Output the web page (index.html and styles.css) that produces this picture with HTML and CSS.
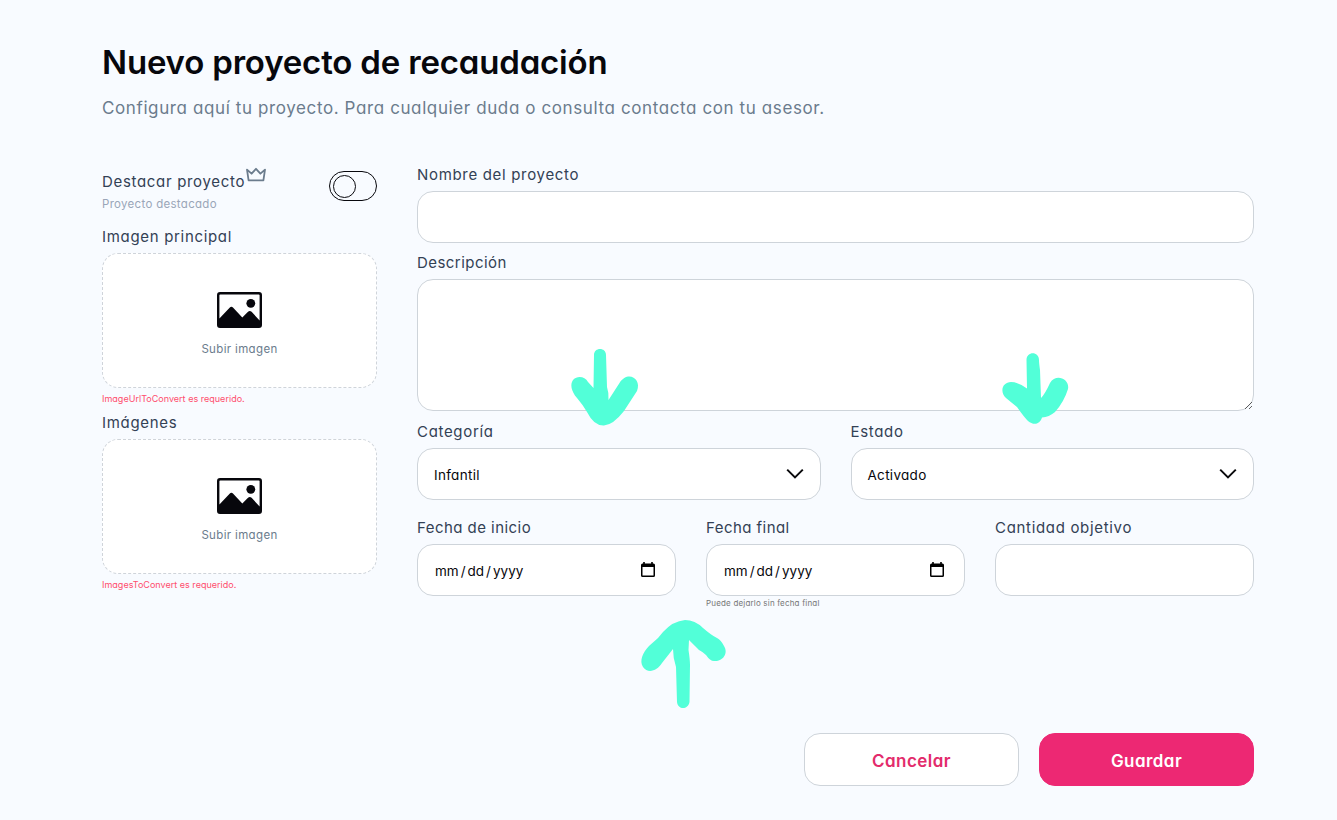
FILE: index.html
```html
<!DOCTYPE html>
<html lang="es">
<head>
<meta charset="utf-8">
<title>Nuevo proyecto de recaudación</title>
<link rel="stylesheet" href="styles.css">
</head>
<body>
<svg class="sprite" width="0" height="0">
  <symbol id="picture" viewBox="0 0 46 37">
    <path fill="#07070c" fill-rule="evenodd" d="M3 0H42Q45 0 45 3V33Q45 36 42 36H3Q0 36 0 33V3Q0 0 3 0ZM3.3 2.4Q2.4 2.4 2.4 3.3V26.5L12.6 15.7Q14.4 14 16.2 15.7L25.3 25.5L31 19.8Q32.8 18 34.6 19.8L42.6 28.5V3.3Q42.6 2.4 41.7 2.4Z"/>
    <circle cx="33.8" cy="11.3" r="4.4" fill="#07070c"/>
  </symbol>
  <symbol id="chevron" viewBox="0 0 18 12"><path d="M1.2 1.6L9 9.4L16.8 1.6" fill="none" stroke="#0a0a0c" stroke-width="2"/></symbol>
  <symbol id="calendar" viewBox="0 0 14 16"><path fill="#000" fill-rule="evenodd" d="M2.2 0H3.8V1.5H10.2V0H11.8V1.5H12.5Q14 1.5 14 3V13.5Q14 15 12.5 15H1.5Q0 15 0 13.5V3Q0 1.5 1.5 1.5H2.2ZM1.5 5V13.5H12.5V5Z"/></symbol>
</svg>
<main class="page">
  <header>
    <h1 class="title">Nuevo proyecto de recaudación</h1>
    <p class="subtitle">Configura aquí tu proyecto. Para cualquier duda o consulta contacta con tu asesor.</p>
  </header>
  <form class="form">
    <section class="media">
      <div class="feature">
        <div>
          <div class="feature-name"><span class="label">Destacar proyecto</span><svg class="crown" viewBox="0 0 22 16"><path d="M2 2.6L6.6 6.7L11 1.8L15.4 6.7L20 2.6L18.4 13.4H3.6Z" fill="none" stroke="#6b7c8d" stroke-width="1.8" stroke-linejoin="round"/></svg></div>
          <div class="feature-note">Proyecto destacado</div>
        </div>
        <span class="toggle"><span class="knob"></span></span>
      </div>
      <div class="label">Imagen principal</div>
      <div class="drop"><svg class="picture"><use href="#picture"/></svg><span>Subir imagen</span></div>
      <div class="error">ImageUrlToConvert es requerido.</div>
      <div class="label">Imágenes</div>
      <div class="drop"><svg class="picture"><use href="#picture"/></svg><span>Subir imagen</span></div>
      <div class="error">ImagesToConvert es requerido.</div>
    </section>
    <section class="fields">
      <div class="field"><label class="label" for="name">Nombre del proyecto</label><input class="control" id="name"></div>
      <div class="field description"><label class="label snug" for="description">Descripción</label><textarea class="control area" id="description"></textarea></div>
      <div class="row two">
        <div class="field"><div class="label">Categoría</div><div class="control picker"><span>Infantil</span><svg class="chevron"><use href="#chevron"/></svg></div></div>
        <div class="field"><div class="label">Estado</div><div class="control picker"><span>Activado</span><svg class="chevron"><use href="#chevron"/></svg></div></div>
      </div>
      <div class="row three">
        <div class="field"><div class="label snug">Fecha de inicio</div><div class="control date"><span>mm<i>/</i>dd<i>/</i>yyyy</span><svg class="calendar"><use href="#calendar"/></svg></div></div>
        <div class="field"><div class="label snug">Fecha final</div><div class="control date"><span>mm<i>/</i>dd<i>/</i>yyyy</span><svg class="calendar"><use href="#calendar"/></svg></div><div class="hint">Puede dejarlo sin fecha final</div></div>
        <div class="field"><label class="label" for="goal">Cantidad objetivo</label><input class="control" id="goal"></div>
      </div>
    </section>
  </form>
  <footer class="actions"><button class="button cancel">Cancelar</button><button class="button save">Guardar</button></footer>
  <svg class="marks" viewBox="0 0 1337 820" fill="#52ffd8">
    <path d="M594 355C594 347 606 347 606 355L607 387Q609 393 608.500 400L619.500 383C628 370 642 379 637 391L624 411Q613 425 604 425.500Q594 426 587 412Q583 405 577 398C571 391 570 384 573 380C578 375 585 377 588 382L593.500 388Z"/>
    <path d="M1026.500 360C1026.500 351 1039 351 1039 360Q1039 363 1040 370L1041 398Q1045 394 1050 383C1056 373 1070 379 1068 389Q1064 402 1055 412Q1049 417 1042 417.500C1040 424 1034 426 1028 421Q1024 417 1017 407Q1012 403 1006 398C999 391 1003 382 1011 382Q1018 382 1027 388.500Z"/>
    <path d="M663 632Q673 621 685 620Q695 620 703 628Q711 635 717 638Q721 640 724 646C729 654 722 662 714 661Q710 661 706 655Q703 652 699 650L689 640L688.500 650Q690 660 690 665L689.500 702C688 710 678 710 677 702L676 667Q673 658 673 649L662 663C657 671 648 674 643 667C639 661 643 652 649 646L658 638Z"/>
  </svg>
</main>
</body>
</html>
```
FILE: styles.css
```css
* { box-sizing: border-box; }
body { margin: 0; background: #f8fbff; font-family: Inter, "Noto Sans", sans-serif; font-feature-settings: "cv11"; }
.sprite { position: absolute; }
.page { position: relative; width: 1337px; height: 820px; padding: 38px 83px 0 102px; }
.title { margin: 0; font-size: 33px; line-height: 48px; font-weight: 600; color: #07070c; letter-spacing: -0.18px; white-space: nowrap; }
.subtitle { margin: 10px 0 0; font-size: 17px; line-height: 24px; color: #6b7c8d; letter-spacing: 0.61px; white-space: nowrap; }
.form { display: grid; grid-template-columns: 275px 837px; column-gap: 40px; height: 570px; padding-top: 43px; }
.label { display: block; height: 24px; margin-bottom: 4px; font-size: 15px; line-height: 24px; color: #334155; letter-spacing: 0.68px; white-space: nowrap; }
.snug { letter-spacing: 0.45px; }
.feature { display: flex; justify-content: space-between; height: 62px; padding-top: 7px; }
.feature-name { display: flex; height: 24px; }
.crown { width: 22px; height: 16px; margin: -3px 0 0 0; }
.feature-note { font-size: 11.500px; line-height: 20px; color: #9aa6b8; letter-spacing: 0.3px; }
.toggle { width: 48px; height: 30px; margin-top: 1px; padding: 3px; border: 1px solid #07070c; border-radius: 15px; }
.knob { display: block; width: 23px; height: 23px; border: 1px solid #07070c; border-radius: 50%; }
.drop { display: flex; flex-direction: column; align-items: center; height: 135px; padding-top: 38px; border: 1px dashed #cfd4da; border-radius: 16px; background: #fff; color: #6b7c8d; font-size: 11.500px; line-height: 18px; letter-spacing: 0.35px; }
.picture { width: 46px; height: 37px; margin-bottom: 11px; }
.error { height: 23px; padding-top: 4px; font-size: 9px; line-height: 14px; color: #ff4d6d; letter-spacing: 0.02px; white-space: nowrap; }
.control { display: block; width: 100%; height: 52px; padding: 0 17px; border: 1px solid #ced4da; border-radius: 16px; background: #fff; color: #07070c; font-family: inherit; font-size: 14px; }
.description { margin-top: 8px; }
.area { height: 132px; }
.row { display: grid; column-gap: 30px; }
.two { grid-template-columns: 1fr 1fr; margin-top: 9px; }
.three { grid-template-columns: repeat(3, 1fr); margin-top: 16px; }
.picker, .date { display: flex; align-items: center; justify-content: space-between; }
.picker span, .date span { padding-top: 2px; }
.picker { padding: 0 16px; font-size: 13.500px; letter-spacing: 0.3px; }
.chevron { width: 18px; height: 12px; }
.date i { font-style: normal; margin: 0 2px; }
.date { padding-right: 20px; font-size: 13.500px; }
.calendar { width: 14px; height: 16px; }
.hint { height: 14px; font-size: 8px; line-height: 14px; color: #777; letter-spacing: 0.18px; }
.actions { display: flex; justify-content: flex-end; gap: 20px; margin-top: 43px; }
.button { width: 215px; height: 53px; padding: 3px 6px 1px; border: 1px solid #ced4da; border-radius: 16px; font-family: inherit; font-feature-settings: inherit; font-size: 17px; font-weight: 600; letter-spacing: 0.45px; }
.cancel { background: #fff; color: #e32b6b; }
.save { background: #ed2873; border-color: #ed2873; color: #fff; }
.marks { position: absolute; left: 0; top: 0; width: 1337px; height: 820px; pointer-events: none; }
```
